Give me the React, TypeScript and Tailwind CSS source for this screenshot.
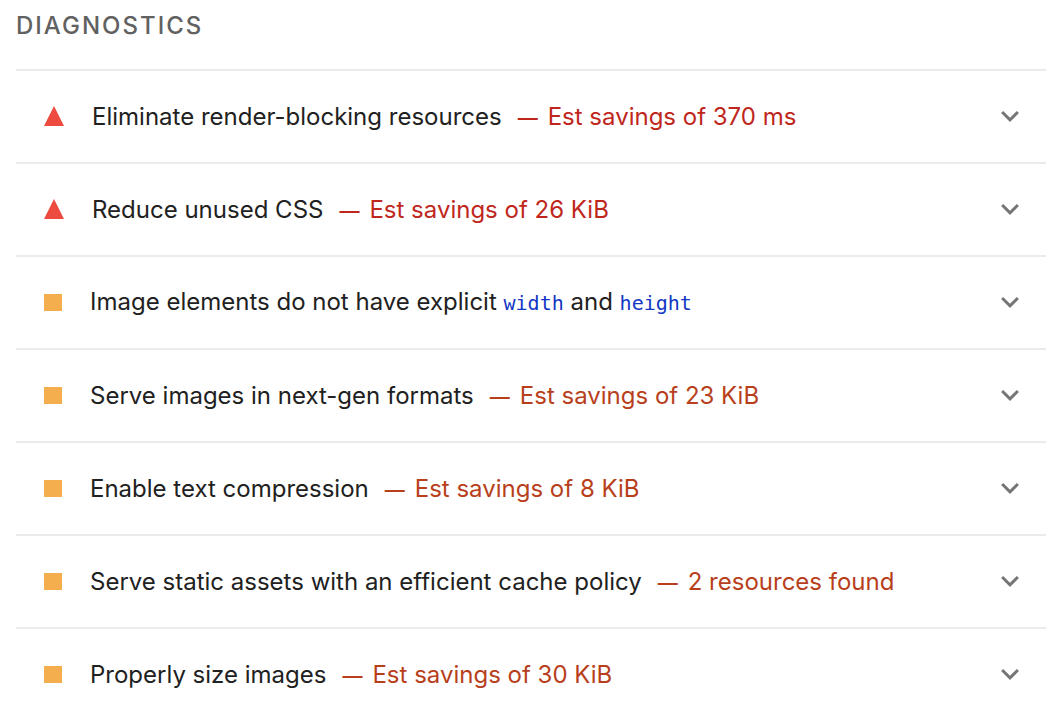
import React from "react";

type Severity = "fail" | "average";

interface Audit {
  id: string;
  severity: Severity;
  title: React.ReactNode;
  detail?: string;
}

function Code({ children }: { children: React.ReactNode }) {
  return (
    <code className="font-['DejaVu_Sans_Mono',monospace] text-[20px] text-[#1237c4]">
      {children}
    </code>
  );
}

const audits: Audit[] = [
  { id: "render-blocking", severity: "fail", title: "Eliminate render-blocking resources", detail: "Est savings of 370 ms" },
  { id: "unused-css", severity: "fail", title: "Reduce unused CSS", detail: "Est savings of 26 KiB" },
  {
    id: "image-size",
    severity: "average",
    title: (
      <>
        Image elements do not have explicit <Code>width</Code> and <Code>height</Code>
      </>
    ),
  },
  { id: "next-gen", severity: "average", title: "Serve images in next-gen formats", detail: "Est savings of 23 KiB" },
  { id: "compression", severity: "average", title: "Enable text compression", detail: "Est savings of 8 KiB" },
  { id: "cache", severity: "average", title: "Serve static assets with an efficient cache policy", detail: "2 resources found" },
  { id: "properly-size", severity: "average", title: "Properly size images", detail: "Est savings of 30 KiB" },
];

function SeverityIcon({ severity }: { severity: Severity }) {
  if (severity === "fail") {
    return (
      <svg className="mr-7 mb-px size-5 shrink-0" viewBox="0 0 20 20" aria-hidden="true">
        <path d="M10 0 20 20H0Z" fill="#ed4a40" />
      </svg>
    );
  }
  return <span className="mr-7 h-[17px] w-[18px] shrink-0 bg-[#f4ae4e]" />;
}

function AuditRow({ audit }: { audit: Audit }) {
  const tone = audit.severity === "fail" ? "text-[#bf271c]" : "text-[#b83f1c]";
  return (
    <li className="border-t-2 border-[#ebebeb]">
      <button type="button" className="flex h-[91px] w-full items-center pr-[27px] pl-7 text-left">
        <SeverityIcon severity={audit.severity} />
        <span className="flex-1">
          {audit.title}
          {audit.detail && (
            <span className={`ml-4 ${tone}`}>
              <span className="mr-[10px] text-[20px] leading-none font-medium">—</span>
              {audit.detail}
            </span>
          )}
        </span>
        <svg className="h-[11px] w-[18px] shrink-0" viewBox="6 8.59 12 7.41" aria-hidden="true">
          <path d="M16.59 8.59 12 13.17 7.41 8.59 6 10l6 6 6-6z" fill="#757575" />
        </svg>
      </button>
    </li>
  );
}

export default function App() {
  return (
    <main className="bg-white pr-[14px] pl-4 font-[Inter,sans-serif] text-[24px] leading-9 text-[#212121] [font-optical-sizing:none]">
      <h2 className="pt-2 pb-[25px] font-medium tracking-[2px] text-[#616161] uppercase">Diagnostics</h2>
      <ul>
        {audits.map((audit) => (
          <AuditRow key={audit.id} audit={audit} />
        ))}
      </ul>
    </main>
  );
}
